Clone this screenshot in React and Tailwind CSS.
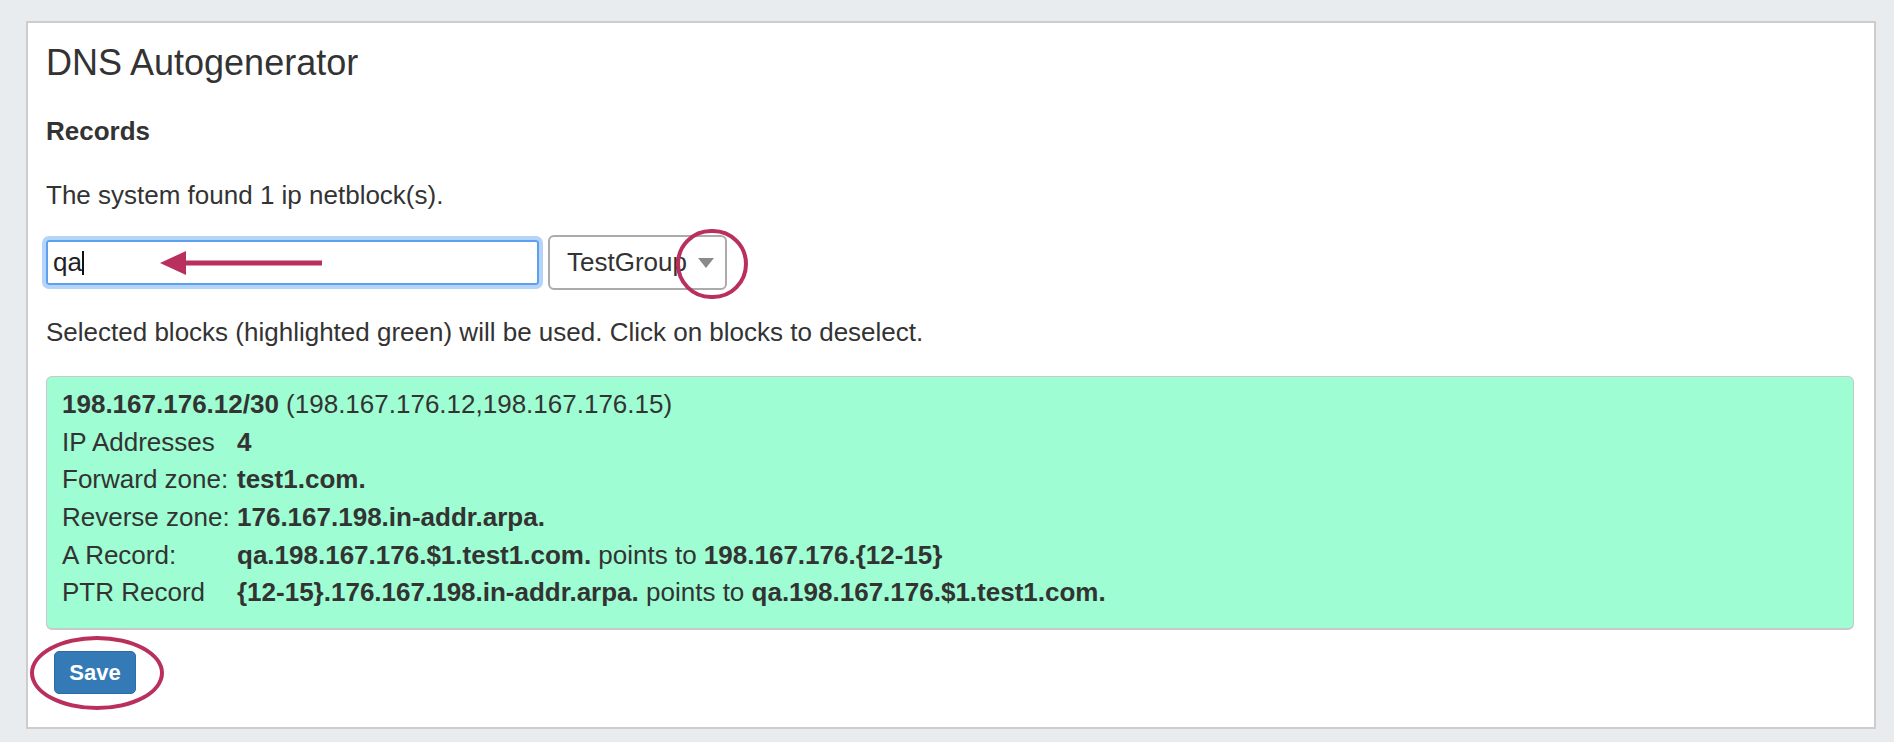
export default function App() {
  const font = { fontFamily: '"Liberation Sans", Arial, sans-serif' };

  return (
    <div className="w-full h-[742px] bg-[#e9ecef] pl-[26px] pt-[21px] text-[#333333]" style={font}>
      <div className="w-[1850px] h-[708px] border-2 border-[#cdcdcd] bg-white pl-[18px] pr-[20px] pt-[20px]">
        <h3 className="text-[36px] leading-[40px] font-normal">DNS Autogenerator</h3>

        <h5 className="mt-[30px] text-[26px] leading-[37.1px] font-bold">Records</h5>

        <p className="mt-[27px] text-[26px] leading-[37.1px]">The system found 1 ip netblock(s).</p>

        {/* filter + group select */}
        <div className="mt-[21px] flex items-center h-[55px]">
          <div className="relative w-[493px] h-[45px] border-2 border-[#5f9ff0] rounded-[3px] shadow-[0_0_0_4px_rgba(150,195,245,0.7)] flex items-center pl-[5px] text-[26px] text-[#222]">
            <span>qa</span>
            <span className="w-[2px] h-[24px] bg-[#111]"></span>
            <svg className="absolute left-[112px] top-[8px]" width="164" height="26" viewBox="0 0 164 26">
              <polygon points="0,13 26,1 26,25" fill="#b92f5d" />
              <rect x="22" y="10.5" width="140" height="5" fill="#b92f5d" />
            </svg>
          </div>

          <div className="relative ml-[9px] w-[179px] h-[55px] border-2 border-[#ababab] rounded-[6px] bg-white flex items-center pl-[17px] text-[26px] text-[#333]">
            <span>TestGroup</span>
            <svg className="absolute left-[148px] top-[21px]" width="16" height="10" viewBox="0 0 16 10">
              <polygon points="0,0 16,0 8,10" fill="#8a8a8a" />
            </svg>
            <div className="absolute left-[126px] top-[-8px] w-[72px] h-[70px] rounded-full border-4 border-[#b92f5d]"></div>
          </div>
        </div>

        <p className="mt-[24px] text-[26px] leading-[37.1px]">
          Selected blocks (highlighted green) will be used. Click on blocks to deselect.
        </p>

        {/* selected block */}
        <div className="mt-[25px] h-[254px] border border-[#c9c9c9] border-b-2 rounded-[6px] bg-[#9efdd2] pl-[15px] pt-[9px] text-[26px] leading-[37.6px]">
          <div>
            <b>198.167.176.12/30</b> (198.167.176.12,198.167.176.15)
          </div>
          <div className="grid grid-cols-[175px_1fr]">
            <span>IP Addresses</span>
            <b>4</b>
            <span>Forward zone:</span>
            <b>test1.com.</b>
            <span>Reverse zone:</span>
            <b>176.167.198.in-addr.arpa.</b>
            <span>A Record:</span>
            <span>
              <b>qa.198.167.176.$1.test1.com.</b> points to <b>198.167.176.{"{12-15}"}</b>
            </span>
            <span>PTR Record</span>
            <span>
              <b>{"{12-15}"}.176.167.198.in-addr.arpa.</b> points to <b>qa.198.167.176.$1.test1.com.</b>
            </span>
          </div>
        </div>

        <div className="relative mt-[21px] ml-[8px] w-[82px]">
          <button className="w-[82px] h-[43px] rounded-[5px] bg-[#337ab7] border border-[#2e6da4] text-white font-bold text-[22px] leading-none">
            Save
          </button>
          <div className="absolute left-[-24px] top-[-15px] w-[134px] h-[74px] rounded-[50%] border-4 border-[#b92f5d] pointer-events-none"></div>
        </div>
      </div>
    </div>
  );
}
